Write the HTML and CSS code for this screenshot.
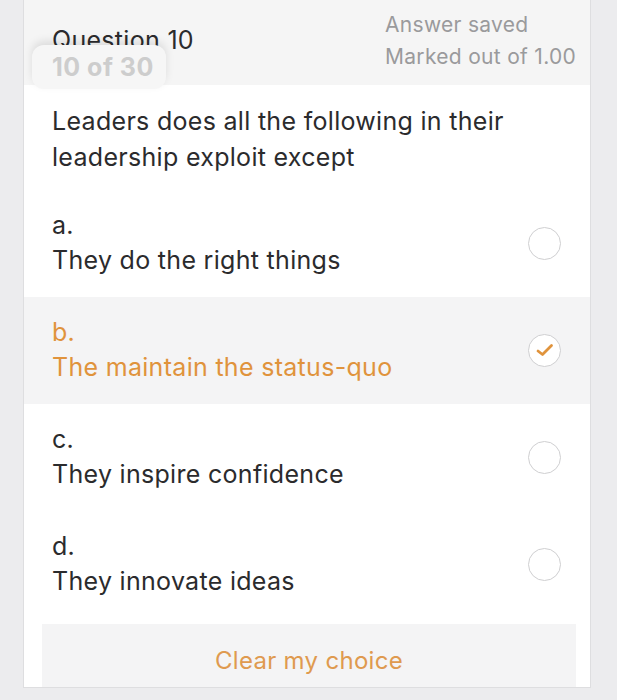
FILE: index.html
```html
<!DOCTYPE html>
<html>
<head>
<meta charset="utf-8">
<link rel="stylesheet" href="styles.css">
</head>
<body>
<div class="page">
  <div class="card">
    <div class="header">
      <div class="qtitle">Question 10</div>
      <div class="status">
        <div>Answer saved</div>
        <div>Marked out of 1.00</div>
      </div>
      <div class="badge">10 of 30</div>
    </div>
    <div class="question">Leaders does all the following in their leadership exploit except</div>
    <div class="options">
      <div class="option">
        <div class="otext"><div>a.</div><div>They do the right things</div></div>
        <span class="radio"></span>
      </div>
      <div class="option selected">
        <div class="otext"><div>b.</div><div>The maintain the status-quo</div></div>
        <span class="radio checked">
          <svg width="20" height="16" viewBox="0 0 20 16"><path d="M3 9 L7.5 12.5 L16.5 3.5" fill="none" stroke="#e0933c" stroke-width="2.8" stroke-linecap="round" stroke-linejoin="round"/></svg>
        </span>
      </div>
      <div class="option">
        <div class="otext"><div>c.</div><div>They inspire confidence</div></div>
        <span class="radio"></span>
      </div>
      <div class="option">
        <div class="otext"><div>d.</div><div>They innovate ideas</div></div>
        <span class="radio"></span>
      </div>
    </div>
    <div class="clear">Clear my choice</div>
  </div>
</div>
</body>
</html>
```

FILE: styles.css
```css
html, body {
  margin: 0;
  padding: 0;
  background: #ececee;
}
body {
  font-family: Inter, Roboto, "Liberation Sans", Arial, sans-serif;
  color: #2b2b2d;
  letter-spacing: 0.3px;
}
.page {
  height: 700px;
  padding: 0 26px 0 23px;
  box-sizing: border-box;
}
.card {
  background: #ffffff;
  border-left: 1px solid #dedee0;
  border-right: 1px solid #dedee0;
  border-bottom: 1px solid #dedee0;
  height: 688px;
  box-sizing: border-box;
  display: flex;
  flex-direction: column;
}
.header {
  position: relative;
  background: #f5f5f5;
  height: 85px;
  padding: 9px 12px 0 28px;
  box-sizing: border-box;
  display: flex;
  justify-content: space-between;
}
.qtitle {
  font-size: 25px;
  line-height: 30px;
  margin-top: 16px;
  color: #2b2b2d;
}
.status {
  width: 193px;
  font-size: 21px;
  line-height: 32px;
  color: #9a9a9c;
}
.badge {
  position: absolute;
  left: 8px;
  top: 45px;
  width: 134px;
  height: 44px;
  padding-left: 20px;
  box-sizing: border-box;
  background: #f6f6f6;
  border-radius: 12px;
  box-shadow: 0 -4px 9px rgba(0, 0, 0, 0.10);
  font-size: 25px;
  font-weight: 700;
  line-height: 44px;
  letter-spacing: 0.5px;
  color: #cdcdcd;
}
.question {
  padding: 18px 60px 0 28px;
  height: 105px;
  box-sizing: border-box;
  font-size: 25px;
  line-height: 36px;
}
.options {
  display: flex;
  flex-direction: column;
}
.option {
  height: 107px;
  box-sizing: border-box;
  padding: 18px 29px 19px 28px;
  display: flex;
  justify-content: space-between;
  align-items: center;
  font-size: 25px;
  line-height: 35px;
}
.option.selected {
  background: #f4f4f5;
  color: #e0933c;
}
.radio {
  width: 31px;
  height: 31px;
  border: 1.5px solid #cfcfd1;
  border-radius: 50%;
  background: #fff;
  display: flex;
  align-items: center;
  justify-content: center;
}
.clear {
  margin: 6px 14px 0 18px;
  flex: 1;
  background: #f4f4f5;
  display: flex;
  align-items: center;
  justify-content: center;
  font-size: 24px;
  color: #df9a4f;
  padding-top: 10px;
}
```
